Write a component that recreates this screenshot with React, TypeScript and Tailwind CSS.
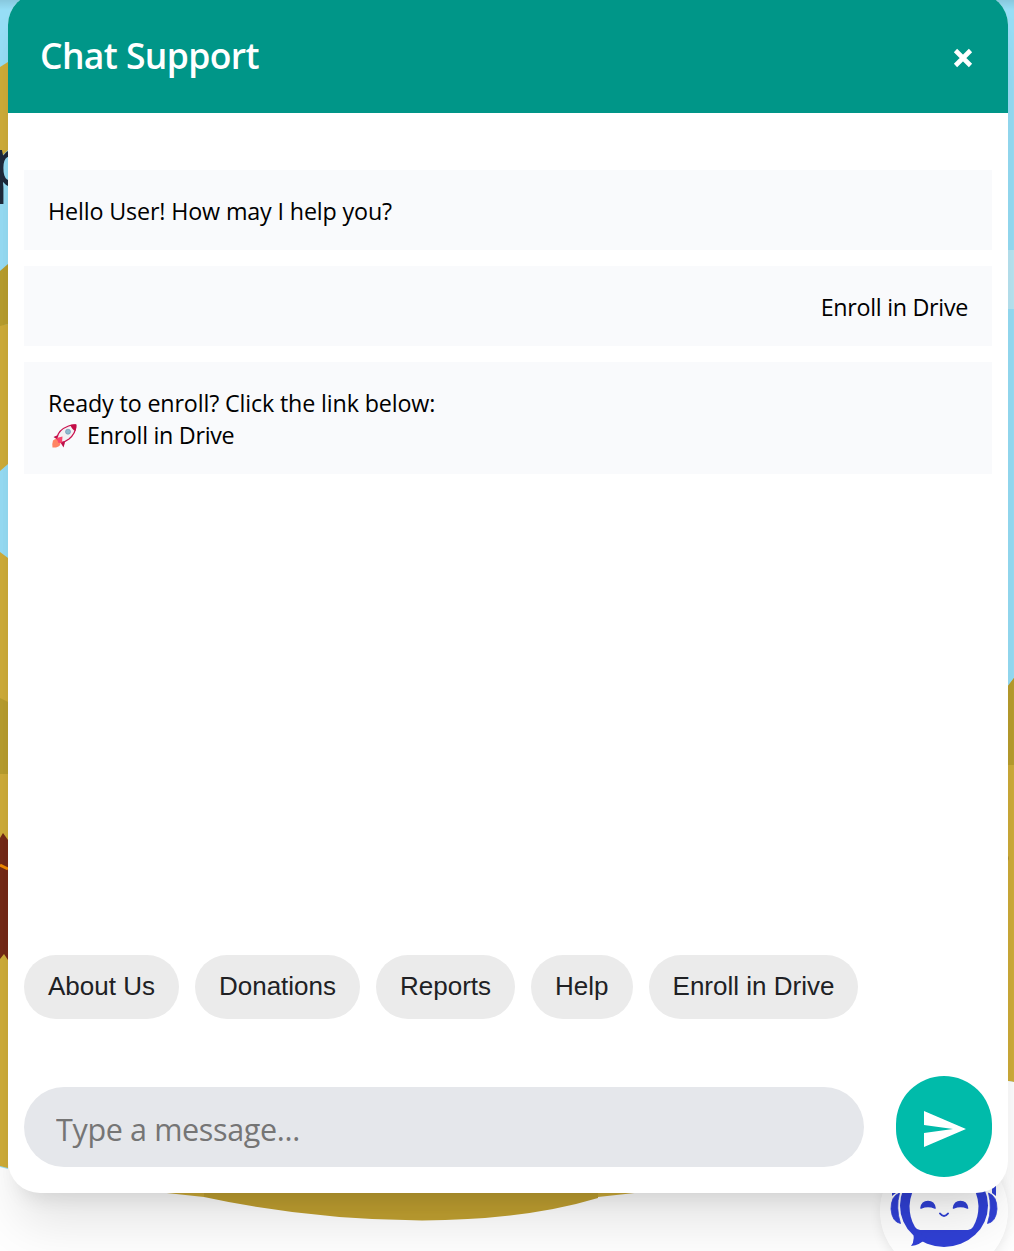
import React from 'react';

const quickReplies = ['About Us', 'Donations', 'Reports', 'Help', 'Enroll in Drive'];

function Scenery() {
  return (
    <>
      <svg className="absolute inset-0" width="1014" height="1251" viewBox="0 0 1014 1251" aria-hidden="true">
        <rect width="1014" height="1251" fill="#fefefe" />
        <rect width="1014" height="1180" fill="#97def6" />
        <rect width="1014" height="10" fill="url(#topShade)" />
        <defs>
          <linearGradient id="topShade" x1="0" y1="0" x2="0" y2="1">
            <stop offset="0" stopColor="#000" stopOpacity=".1" />
            <stop offset="1" stopColor="#000" stopOpacity="0" />
          </linearGradient>
        </defs>
        <path d="M0 67L8 62V150L0 158Z" fill="#cfad39" />
        <path d="M0 325L8 324V464L0 471Z" fill="#cfad39" />
        <path d="M0 271L8 264V324L0 326Z" fill="#b99e2e" />
        <path d="M0 552L8 558V1168L0 1166Z" fill="#cfad39" />
        <path d="M0 698L8 702V774H0Z" fill="#b99e2e" />
        <path d="M0 838L3 833L8 840V960L4 954L0 959Z" fill="#752a17" />
        <path d="M0 865L8 869" stroke="#f08a00" strokeWidth="3" />
        <path d="M1008 250H1014V309H1008Z" fill="#b9e6f3" />
        <path d="M1008 686L1014 678V1082L1008 1081Z" fill="#cfad39" />
        <path d="M1008 686L1014 678V765H1008Z" fill="#b99e2e" />
        <path d="M1007 855Q1011 858 1007 862Z" fill="#b0922d" />
        <path d="M0 1167L8 1169V1251H0ZM8 1160H1008V1251H8ZM1008 1081L1014 1082V1251H1008Z" fill="#fefefe" />
        <path d="M120 1188L204 1197H598L680 1188Z" fill="#cdab38" />
        <path d="M204 1190V1197Q310 1220 422 1220.500Q525 1220 598 1198V1190Z" fill="#bf9f30" />
      </svg>
      <span className="absolute top-[127px] left-[-10px] text-[68px] leading-[68px] font-semibold text-[#1e293b]" aria-hidden="true">p</span>
    </>
  );
}

function Robot() {
  return (
    <svg className="absolute top-[1147px] left-[880px] rounded-full shadow-[0_4px_12px_rgba(0,0,0,0.08)]" width="128" height="128" viewBox="880 1147 128 128" aria-hidden="true">
      <circle cx="944" cy="1211" r="64" fill="#fff" />
      <ellipse cx="944" cy="1205.500" rx="44" ry="41.500" fill="#3040d5" />
      <path d="M912 1227Q916 1240 911 1246Q920 1245 927 1238Z" fill="#3040d5" />
      <path d="M920 1230Q917 1230 915 1227Q909.500 1218 909.500 1206Q910 1192 920 1180H968Q978 1192 978.500 1206Q978.500 1218 973 1227Q971 1230 968 1230Z" fill="#fff" />
      <path d="M899.500 1193Q891 1196 891 1209Q892 1222 900.500 1223.500Q895.500 1208 899.500 1193Z" fill="#3040d5" stroke="#3040d5" strokeWidth=".800" />
      <path d="M988.500 1193Q997 1196 997 1209Q996 1222 987.500 1223.500Q992.500 1208 988.500 1193Z" fill="#3040d5" stroke="#3040d5" strokeWidth=".800" />
      <path d="M892 1185H896V1193L892 1196ZM992 1185H996V1196L992 1193Z" fill="#3040d5" />
      <path d="M921 1208Q922 1201.500 928 1201.500Q934 1201.500 935 1208Q928 1205 921 1208Z" fill="#3040d5" stroke="#3040d5" strokeWidth="1.600" strokeLinejoin="round" />
      <path d="M953.500 1208Q954.500 1201.500 960.500 1201.500Q966.500 1201.500 967.500 1208Q960.500 1205 953.500 1208Z" fill="#3040d5" stroke="#3040d5" strokeWidth="1.600" strokeLinejoin="round" />
      <path d="M940 1213.500Q944 1218.500 948 1213.500" fill="none" stroke="#3040d5" strokeWidth="2" strokeLinecap="round" />
    </svg>
  );
}

function Rocket() {
  return (
    <svg className="mr-[9px] ml-1 inline-block h-6 w-[26px] align-[-4px]" viewBox="0 0 26 24" role="img" aria-label="rocket">
      <path d="M1 16.500Q5 13 8 17Q10 22 4 23.500H.500Q0 19 1 16.500Z" fill="#ff8463" />
      <path d="M1.500 13L7 10.500L13 18.500L11.500 23.500L8.500 18.500L4.500 15Z" fill="#bd1049" />
      <path d="M5 14Q6 6 16.500 2Q21 .500 23.500 1Q24.500 9 17 15Q13 18 9.500 18.500Z" fill="#f3f0f3" stroke="#c9124f" strokeWidth="1.300" />
      <path d="M18.500 1Q22 0 24.500 .600Q24.800 4 23.300 7Q19.500 5 18.500 1Z" fill="#c30d47" />
      <path d="M4.500 14L10.500 12.500L10 18.500L6.500 19Z" fill="#f8446c" />
      <circle cx="16" cy="7.700" r="2.500" fill="#8dbbd0" stroke="#7397b5" strokeWidth=".700" />
    </svg>
  );
}

export default function App() {
  return (
    <div className="relative h-[1251px] w-[1014px] overflow-hidden font-['Open_Sans',sans-serif]">
      <Scenery />
      <Robot />
      <main className="relative -mt-[7px] ml-2 flex h-[1200px] w-[1000px] flex-col overflow-hidden rounded-[32px] bg-white shadow-[0_40px_50px_-10px_rgba(0,0,0,0.1),0_16px_20px_-12px_rgba(0,0,0,0.1)]">
        <header className="flex h-[120px] shrink-0 items-center justify-between bg-[#009688] px-8 text-white">
          <h1 className="pt-[3px] text-[35.5px] leading-[48px] font-semibold tracking-[-0.6px] whitespace-nowrap">Chat Support</h1>
          <button aria-label="Close" className="mt-[9px] mr-[3px]">
            <svg width="20" height="20" viewBox="0 0 20 20">
              <path d="M2.500 2.500L17.500 17.500M17.500 2.500L2.500 17.500" stroke="white" strokeWidth="4.600" />
            </svg>
          </button>
        </header>
        <section className="mt-[57px] flex flex-col gap-4 px-4 text-[23.3px] leading-8 tracking-[-0.15px] text-black">
          <p className="bg-[#f9fafc] px-6 pt-[25px] pb-[23px]"><span>Hello User! How may I help you?</span></p>
          <p className="bg-[#f9fafc] px-6 pt-[25px] pb-[23px] text-right"><span className="tracking-[-0.3px]">Enroll in Drive</span></p>
          <p className="bg-[#f9fafc] px-6 pt-[25px] pb-[23px]">
            <span>Ready to enroll? Click the link below:</span><br />
            <Rocket /><span className="tracking-[-0.3px]">Enroll in Drive</span>
          </p>
        </section>
        <nav className="mt-auto mb-[57px] flex gap-4 px-4 font-['Liberation_Sans',sans-serif]">
          {quickReplies.map((label) => (
            <button key={label} className="h-16 rounded-full bg-[#ebebeb] px-6 pb-0.5 text-[26px] whitespace-nowrap text-[#202124]">{label}</button>
          ))}
        </nav>
        <form className="mb-4 flex h-[101px] shrink-0 items-center gap-8 px-4">
          <input aria-label="Message" placeholder="Type a message..." className="h-20 w-[840px] rounded-full bg-[#e5e7eb] px-8 pt-1 text-[30.5px] tracking-[-0.35px] placeholder:text-[#757575]" />
          <button type="button" aria-label="Send" className="flex h-[101px] w-24 items-center justify-center rounded-[48px] bg-[#00bbaa]">
            <svg className="mt-1 ml-0.5" width="42" height="36" viewBox="0 0 42 36">
              <path d="M0 0L42 18L0 36V22L29 18L0 14Z" fill="white" />
            </svg>
          </button>
        </form>
      </main>
    </div>
  );
}
